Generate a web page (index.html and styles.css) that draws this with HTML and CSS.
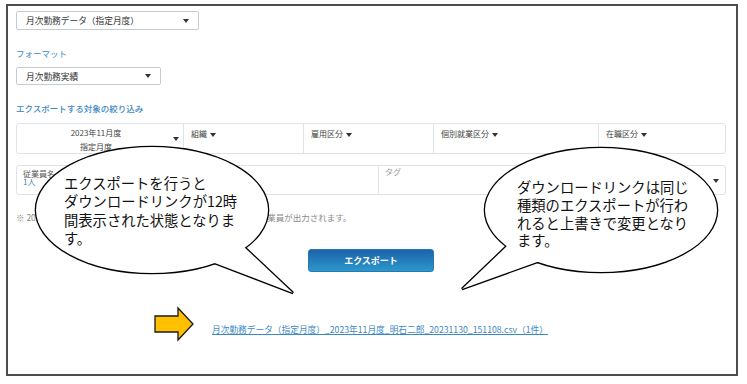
FILE: index.html
```html
<!DOCTYPE html>
<html lang="ja">
<head>
<meta charset="utf-8">
<title>エクスポート</title>
<link rel="stylesheet" href="styles.css">
</head>
<body>
<div class="frame">
  <div class="content">
    <div class="select select-wide"><span>月次勤務データ（指定月度）</span><i class="caret"></i></div>
    <div class="label label-format">フォーマット</div>
    <div class="select select-narrow"><span>月次勤務実績</span><i class="caret"></i></div>
    <div class="label label-filter">エクスポートする対象の絞り込み</div>
    <div class="filter-row">
      <div class="cell cell-month">
        <div class="month-text"><div>2023年11月度</div><div>指定月度</div></div>
        <i class="caret"></i>
      </div>
      <div class="cell cell-org">組織<i class="caret caret-inline"></i></div>
      <div class="cell cell-emp">雇用区分<i class="caret caret-inline"></i></div>
      <div class="cell cell-indiv">個別就業区分<i class="caret caret-inline"></i></div>
      <div class="cell cell-status">在職区分<i class="caret caret-inline"></i></div>
    </div>
    <div class="filter-row2">
      <div class="cell2 cell-name">
        <div class="name-label">従業員名</div>
        <div class="name-count">1人</div>
      </div>
      <div class="cell2 cell-tag"><span class="tag-placeholder">タグ</span><i class="caret"></i></div>
    </div>
    <p class="note">※ 2023年11月度締め日時点で所属組織・雇用区分に該当する全従業員が出力されます。</p>
    <div class="actions"><button class="export-btn" type="button">エクスポート</button></div>
    <div class="download"><a class="download-link" href="#">月次勤務データ（指定月度）_2023年11月度_明石二郎_20231130_151108.csv（1件）</a></div>
  </div>
</div>

<svg class="overlay" width="747" height="384" viewBox="0 0 747 384" aria-hidden="true">
  <g stroke="#000" stroke-width="2.6" stroke-linejoin="miter" fill="#fff">
    <ellipse cx="152" cy="210" rx="116" ry="63"/>
    <polygon points="242,245 293,293 212,262"/>
    <ellipse cx="601" cy="210" rx="116" ry="62"/>
    <polygon points="508,245 462,289 540,261"/>
  </g>
  <g fill="#fff" stroke="none">
    <ellipse cx="152" cy="210" rx="116" ry="63"/>
    <polygon points="242,245 293,293 212,262"/>
    <ellipse cx="601" cy="210" rx="116" ry="62"/>
    <polygon points="508,245 462,289 540,261"/>
  </g>
  <polygon points="155,316 178,316 178,308 193,324 178,340 178,332 155,332" fill="#FFC000" stroke="#1a1a1a" stroke-width="1.3" stroke-linejoin="miter"/>
</svg>
<div class="callout-text callout-left">エクスポートを行うと<br>ダウンロードリンクが12時<br>間表示された状態となりま<br>す。</div>
<div class="callout-text callout-right">ダウンロードリンクは同じ<br>種類のエクスポートが行わ<br>れると上書きで変更となり<br>ます。</div>
</body>
</html>
```

FILE: styles.css
```css
* { box-sizing: border-box; }
html, body { margin: 0; padding: 0; background: #fff; }
body {
  font-family: "Noto Sans CJK JP", "Noto Sans", sans-serif;
  color: #333;
  width: 747px;
  height: 384px;
  overflow: hidden;
  position: relative;
}
.frame {
  margin: 4px 0 0 6px;
  width: 732px;
  height: 372px;
  border: 2px solid #4d4d4d;
}
.content { padding: 5px 10px 0 8px; }

.select {
  display: flex;
  align-items: center;
  justify-content: space-between;
  border: 1px solid #c3cbd3;
  border-radius: 2px;
  font-size: 8.7px;
  color: #333;
  padding: 0 9px 0 9px;
}
.select-wide { width: 183px; height: 19px; }
.select-narrow { width: 145px; height: 18px; margin-top: 8px; }

.caret {
  display: inline-block;
  width: 0; height: 0;
  border-left: 3px solid transparent;
  border-right: 3px solid transparent;
  border-top: 4px solid #333;
}
.caret-inline { margin-left: 3px; vertical-align: middle; }

.label {
  font-size: 8.5px;
  line-height: 12px;
  color: #3d88c2;
}
.label-format { margin-top: 17px; }
.label-filter { margin-top: 17px; font-weight: 500; }

.filter-row {
  margin-top: 9px;
  display: flex;
  height: 31px;
  border: 1px solid #dde3e8;
  border-radius: 3px;
}
.cell {
  font-size: 8px;
  line-height: 12px;
  color: #444;
  padding: 4px 0 0 7px;
  border-left: 1px solid #dde3e8;
}
.cell-month {
  border-left: none;
  width: 166px;
  display: flex;
  align-items: center;
  padding: 0 4px 0 0;
}
.month-text {
  flex: 1;
  text-align: center;
  line-height: 14px;
  align-self: flex-start;
  padding-top: 2px;
  padding-left: 2px;
}
.cell-org { width: 120px; }
.cell-emp { width: 130px; }
.cell-indiv { width: 165px; }
.cell-status { flex: 1; }

.filter-row2 {
  margin-top: 11px;
  display: flex;
  height: 30px;
  border: 1px solid #dde3e8;
  border-radius: 3px;
}
.cell2 { font-size: 8px; }
.cell-name {
  width: 361px;
  padding: 4px 0 0 6px;
  line-height: 8px;
}
.name-label { color: #555; }
.name-count { color: #3d88c2; }
.cell-tag {
  flex: 1;
  border-left: 1px solid #dde3e8;
  display: flex;
  justify-content: space-between;
  padding: 1px 6px 0 6px;
}
.tag-placeholder { color: #9a9a9a; line-height: 10px; }
.cell-tag .caret { align-self: center; }

.note {
  margin: 16px 0 0;
  font-size: 8.5px;
  line-height: 12px;
  color: #8a8a8a;
}

.actions { margin-top: 26px; display: flex; justify-content: center; }
.export-btn {
  width: 126px;
  height: 23px;
  border: 1px solid #2777b5;
  border-radius: 3px;
  background: linear-gradient(#1d62ab, #2c98cc);
  color: #fff;
  font-family: inherit;
  font-size: 9px;
  font-weight: 700;
  padding: 0;
}

.download { margin-top: 48px; padding-left: 196px; line-height: 12px; }
.download-link {
  font-size: 8.7px;
  color: #3d88c2;
  text-decoration: underline;
}

.overlay { position: absolute; left: 0; top: 0; pointer-events: none; }
.callout-text {
  position: absolute;
  font-size: 14.3px;
  color: #111;
  white-space: nowrap;
}
.callout-left { left: 64px; top: 174px; line-height: 18.3px; }
.callout-right { left: 517px; top: 178px; line-height: 17.8px; }
```
